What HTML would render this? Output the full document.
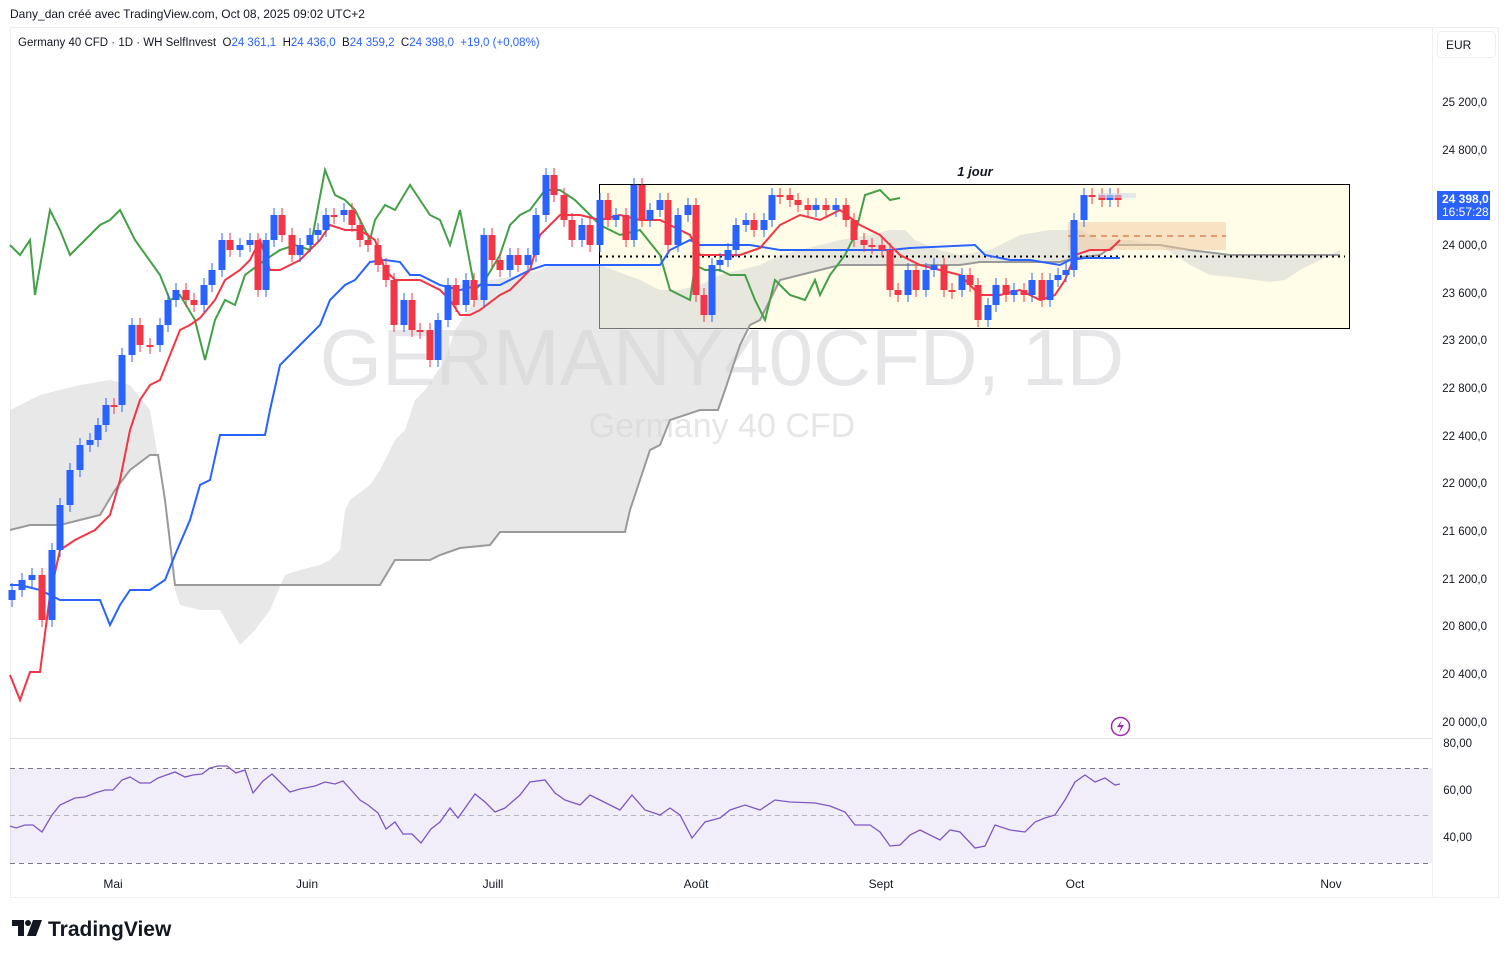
<!DOCTYPE html>
<html><head><meta charset="utf-8"><style>
body{margin:0;background:#fff;width:1509px;height:958px;overflow:hidden;font-family:"Liberation Sans",sans-serif}
svg{position:absolute;left:0;top:0}
</style></head><body>
<svg id="s" width="1509" height="958" xmlns="http://www.w3.org/2000/svg" font-family="Liberation Sans, sans-serif">
<text x="10" y="18" font-size="12" fill="#131722">Dany_dan créé avec TradingView.com, Oct 08, 2025 09:02 UTC+2</text>
<rect x="10.5" y="27.5" width="1488" height="870" fill="#fff" stroke="#eceef2"/>
<line x1="10" y1="738.5" x2="1432" y2="738.5" stroke="#e0e3eb"/>
<line x1="1432.5" y1="28" x2="1432.5" y2="897" stroke="#f0f0f0"/>
<text x="722" y="385" font-size="80" fill="#e6e6e9" text-anchor="middle">GERMANY40CFD, 1D</text>
<text x="722" y="437" font-size="34" fill="#e6e6e9" text-anchor="middle">Germany 40 CFD</text>
<rect x="599.5" y="184.5" width="750" height="144" fill="#fffde8" stroke="#000"/>
<text x="975" y="176" font-size="13" font-style="italic" font-weight="bold" fill="#131722" text-anchor="middle">1 jour</text>
<polygon fill="#d6d6d6" fill-opacity="0.55" points="10,410 40,395 80,385 110,380 130,385 150,410 160,470 170,530 175,590 180,605 200,610 220,610 240,645 255,630 270,610 285,575 300,570 320,565 330,560 340,550 345,510 350,500 370,485 380,470 395,440 405,430 415,400 425,390 435,375 445,360 455,330 475,300 490,280 520,275 540,270 550,265 600,265 640,280 660,290 680,290 700,285 720,275 740,270 760,265 780,255 800,250 840,240 870,235 890,230 905,230 915,240 940,250 960,255 990,250 1000,245 1020,235 1050,230 1080,230 1100,240 1130,240 1160,245 1190,265 1210,275 1240,278 1270,282 1285,280 1300,270 1320,260 1340,250 1340,255 1230,255 1190,250 1160,245 1130,245 1115,245 1100,255 1075,258 1060,262 980,262 960,265 840,265 820,270 800,275 780,280 770,300 760,320 750,325 740,345 725,390 718,410 700,410 670,420 660,445 650,450 630,510 625,532 520,532 500,532 490,545 460,548 440,555 430,560 395,560 380,585 175,585 165,500 158,455 150,455 130,470 115,490 100,515 60,525 30,525 10,530"/>
<polyline fill="none" stroke="#9a9a9a" stroke-width="2" points="10,530 30,525 60,525 100,515 115,490 130,470 150,455 158,455 165,500 175,585 380,585 395,560 430,560 440,555 460,548 490,545 500,532 520,532 625,532 630,510 650,450 660,445 670,420 700,410 718,410 725,390 740,345 750,325 760,320 770,300 780,280 800,275 820,270 840,265 960,265 980,262 1060,262 1075,258 1100,255 1115,245 1160,245 1190,250 1230,255 1340,255"/>
<rect x="1068" y="222" width="158" height="28" fill="#f0c9a0" fill-opacity="0.5"/>
<line x1="1068" y1="236" x2="1226" y2="236" stroke="#c0581a" stroke-dasharray="6,5"/>
<line x1="600" y1="256.5" x2="1345" y2="256.5" stroke="#000" stroke-width="2" stroke-dasharray="2,4"/>
<polyline fill="none" stroke="#43a047" stroke-width="2" points="10,245 20,255 30,240 35,295 50,210 60,230 70,255 90,235 100,225 110,220 120,210 135,240 160,275 170,300 180,295 195,320 205,360 215,320 225,300 235,305 245,275 265,260 280,250 295,245 310,250 325,170 335,195 345,200 355,210 370,240 375,220 385,205 395,210 410,185 420,200 430,215 440,220 450,245 460,210 475,290 485,280 500,255 510,225 520,215 530,210 545,190 560,190 575,200 590,215 600,225 620,235 640,230 660,255 670,290 680,295 690,300 695,265 705,270 720,270 730,275 745,275 755,300 765,320 775,280 790,295 805,300 815,280 820,295 830,275 845,255 855,235 865,195 880,190 890,200 900,198"/>
<polyline fill="none" stroke="#2962ff" stroke-width="2" points="10,585 20,585 40,590 60,600 100,600 110,625 120,605 130,590 150,590 165,580 175,555 190,520 200,485 210,480 220,435 265,435 270,410 280,365 300,345 320,325 330,300 345,285 355,280 370,262 385,260 400,262 410,275 420,275 440,285 460,290 480,285 500,285 520,275 530,270 545,265 660,265 670,250 690,240 700,245 750,245 780,250 890,250 910,248 975,245 985,255 1010,260 1030,260 1060,265 1070,260 1085,258 1120,258"/>
<polyline fill="none" stroke="#f23645" stroke-width="2" points="10,675 20,700 30,672 40,672 50,595 60,550 75,540 95,530 110,515 120,480 130,430 140,400 150,385 160,380 170,355 180,330 190,325 200,318 215,300 225,280 240,270 250,260 260,240 270,270 280,270 290,265 300,260 320,240 330,225 345,230 360,230 375,240 385,270 395,280 420,280 440,290 450,300 460,315 470,315 480,310 500,295 510,290 520,280 530,270 540,235 550,225 560,215 580,215 600,220 620,215 640,220 660,220 680,230 690,235 700,255 740,255 760,248 780,225 800,215 820,220 840,210 860,225 880,235 900,255 920,265 940,270 960,275 970,285 980,295 1000,295 1020,290 1040,300 1055,295 1065,280 1075,255 1090,250 1110,250 1120,240"/>
<g id="c"></g>
<rect x="1098" y="193" width="38" height="5" fill="#cfd8ec" fill-opacity="0.6"/>
<circle cx="1120.5" cy="726.5" r="9" fill="#fff" stroke="#9c27b0" stroke-width="1.5"/>
<path d="M1122 720 L1117 727 H1121 L1119 733 L1124 725 H1120 Z" fill="#9c27b0"/>
<rect x="10" y="768" width="1422" height="95" fill="#7e57c2" fill-opacity="0.1"/>
<line x1="10" y1="768.5" x2="1432" y2="768.5" stroke="#787b86" stroke-dasharray="5,4"/>
<line x1="10" y1="815.5" x2="1432" y2="815.5" stroke="#b2b5be" stroke-dasharray="5,4"/>
<line x1="10" y1="863.5" x2="1432" y2="863.5" stroke="#787b86" stroke-dasharray="5,4"/>
<polyline fill="none" stroke="#7e57c2" stroke-width="1.3" points="10,826 16,828 25,825 33,825 42,832 52,815 60,805 75,798 85,797 95,793 105,790 113,790 122,780 130,777 140,783 150,783 158,778 175,772 185,777 193,775 202,774 210,768 218,766 227,766 236,773 245,770 253,793 263,781 272,774 290,792 300,789 315,786 325,782 335,784 343,781 360,800 368,805 378,813 386,829 395,822 403,834 412,834 421,843 431,829 440,822 450,808 458,818 475,794 485,802 495,812 505,808 520,795 530,782 545,780 555,793 565,800 580,805 590,795 600,800 610,805 620,810 632,795 645,810 660,815 670,808 680,815 692,838 705,822 720,818 730,810 745,805 760,810 775,800 790,802 815,803 830,806 845,812 855,825 870,825 880,832 890,846 900,845 910,835 920,830 930,835 940,840 950,830 960,832 975,848 985,846 995,825 1010,830 1025,832 1035,822 1045,818 1055,815 1065,800 1075,782 1085,775 1095,782 1105,778 1115,785 1120,784"/>
<g font-size="11.5" fill="#131722" text-anchor="end">
<text x="1487" y="106">25 200,0</text><text x="1487" y="154">24 800,0</text><text x="1487" y="249">24 000,0</text><text x="1487" y="297">23 600,0</text><text x="1487" y="344">23 200,0</text><text x="1487" y="392">22 800,0</text><text x="1487" y="440">22 400,0</text><text x="1487" y="487">22 000,0</text><text x="1487" y="535">21 600,0</text><text x="1487" y="583">21 200,0</text><text x="1487" y="630">20 800,0</text><text x="1487" y="678">20 400,0</text><text x="1487" y="726">20 000,0</text>
<text x="1472" y="747">80,00</text><text x="1472" y="794">60,00</text><text x="1472" y="841">40,00</text>
</g>
<rect x="1437" y="191" width="53" height="29" fill="#2962ff"/>
<text x="1442" y="203" font-size="12" font-weight="bold" fill="#fff">24 398,0</text>
<text x="1442" y="216" font-size="12" fill="#fff">16:57:28</text>
<rect x="1437.5" y="31.5" width="58" height="26" rx="4" fill="#fff" stroke="#eceef2"/>
<text x="1446" y="49" font-size="12" fill="#131722">EUR</text>
<g font-size="12" fill="#131722" text-anchor="middle">
<text x="113" y="888">Mai</text><text x="307" y="888">Juin</text><text x="493" y="888">Juill</text><text x="696" y="888">Août</text><text x="881" y="888">Sept</text><text x="1075" y="888">Oct</text><text x="1331" y="888">Nov</text>
</g>
<text x="18" y="46" font-size="11.5" fill="#131722">Germany 40 CFD · 1D · WH SelfInvest&#160;&#160;O<tspan fill="#2962ff">24 361,1</tspan>&#160;&#160;H<tspan fill="#2962ff">24 436,0</tspan>&#160;&#160;B<tspan fill="#2962ff">24 359,2</tspan>&#160;&#160;C<tspan fill="#2962ff">24 398,0</tspan>&#160;&#160;<tspan fill="#2962ff">+19,0 (+0,08%)</tspan></text>
<g fill="#131722">
<path d="M12 920 H24 V936 H18 V926 H12 Z"/><circle cx="28" cy="923" r="3"/><path d="M33 920 H42 L36 936 H27 Z"/>
</g>
<text x="48" y="936" font-size="21" font-weight="bold" fill="#131722">TradingView</text>
</svg>
<script>
var d="12:590,22:580,32:575,42:620,52:550,60:505,70:470,80:445,90:440,98:425,106:405,114:405,122:355,132:325,140:345,150:345,160:325,168:300,176:290,186:300,194:305,204:285,212:270,222:240,230:250,240:245,250:240,258:290,266:240,274:215,282:235,292:255,300:245,310:235,318:230,326:215,334:215,344:210,352:225,360:240,368:245,378:265,386:280,394:325,404:300,412:330,420:330,430:360,438:320,448:285,456:305,466:280,474:300,484:235,492:260,500:270,510:255,518:265,528:255,536:215,546:175,554:195,564:220,572:240,582:225,590:245,600:200,608:220,616:215,626:240,634:185,642:220,650:210,660:200,668:245,678:215,688:205,696:295,704:315,712:265,720:260,728:250,736:225,746:220,754:230,764:220,772:195,780:195,790:200,798:205,808:210,816:205,826:210,836:205,846:220,854:240,864:245,872:245,882:250,890:290,898:295,908:270,916:290,926:270,934:265,944:290,952:290,962:275,970:285,978:320,988:305,996:285,1006:295,1014:290,1024:295,1032:280,1042:300,1050:280,1058:275,1066:270,1074:220,1084:195,1092:195,1102:200,1110:195,1118:200".split(",");
var g=document.getElementById("c"),h="",prev=600;
for(var i=0;i<d.length;i++){var p=d[i].split(":"),x=+p[0],y=+p[1];var o=prev;var up=y<o;var c=up?"#2962ff":"#f23645";var t=Math.min(o,y),b=Math.max(o,y);if(b-t<2)b=t+2;
h+='<line x1="'+x+'" x2="'+x+'" y1="'+(t-7)+'" y2="'+(b+7)+'" stroke="'+c+'"/><rect x="'+(x-3.5)+'" y="'+t+'" width="7" height="'+(b-t)+'" fill="'+c+'"/>';prev=y;}
g.innerHTML=h;
</script>
</body></html>
